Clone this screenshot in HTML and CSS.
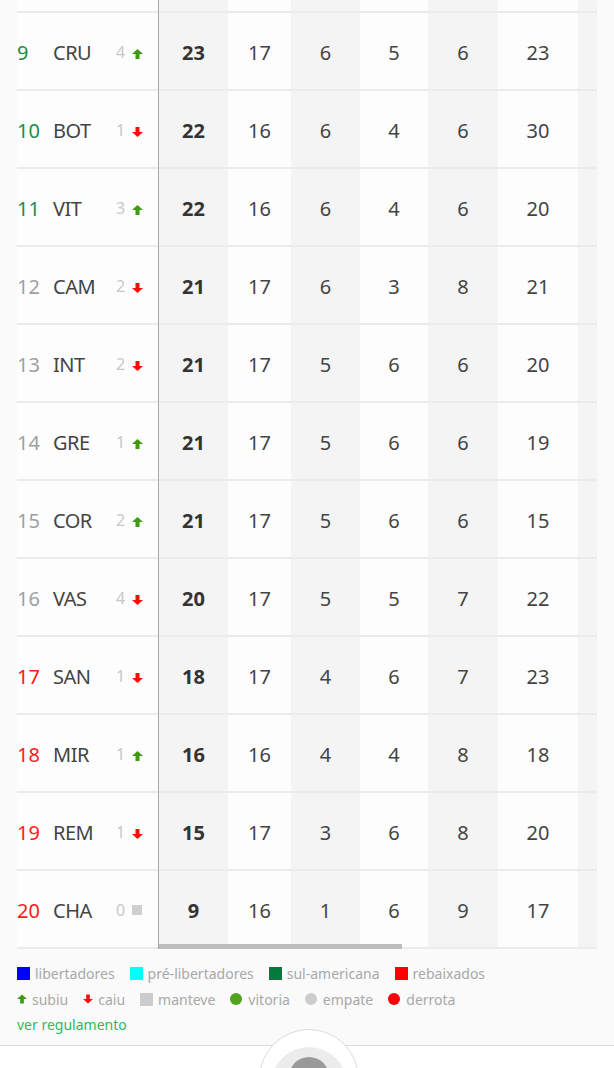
FILE: index.html
```html
<!DOCTYPE html>
<html lang="pt-BR">
<head>
    <meta charset="UTF-8">
    <meta name="viewport" content="width=device-width, initial-scale=1.0">
    <title>Classificação</title>
    <link rel="stylesheet" href="styles.css">
</head>
<body>
    <div class="standings">
        <!-- fixed columns: position, team, variation -->
        <div class="fixed">
            <div class="row stub"></div>
            <div class="row"><span class="pos sula">9</span><span class="team">CRU</span><span class="var">4<svg class="arrow up" viewBox="0 0 11 10"><polygon points="5.5,0 11,5 7.5,5 7.5,10 3.5,10 3.5,5 0,5"/></svg></span></div>
            <div class="row"><span class="pos sula">10</span><span class="team">BOT</span><span class="var">1<svg class="arrow down" viewBox="0 0 11 10"><polygon points="5.5,10 11,5 7.5,5 7.5,0 3.5,0 3.5,5 0,5"/></svg></span></div>
            <div class="row"><span class="pos sula">11</span><span class="team">VIT</span><span class="var">3<svg class="arrow up" viewBox="0 0 11 10"><polygon points="5.5,0 11,5 7.5,5 7.5,10 3.5,10 3.5,5 0,5"/></svg></span></div>
            <div class="row"><span class="pos">12</span><span class="team">CAM</span><span class="var">2<svg class="arrow down" viewBox="0 0 11 10"><polygon points="5.5,10 11,5 7.5,5 7.5,0 3.5,0 3.5,5 0,5"/></svg></span></div>
            <div class="row"><span class="pos">13</span><span class="team">INT</span><span class="var">2<svg class="arrow down" viewBox="0 0 11 10"><polygon points="5.5,10 11,5 7.5,5 7.5,0 3.5,0 3.5,5 0,5"/></svg></span></div>
            <div class="row"><span class="pos">14</span><span class="team">GRE</span><span class="var">1<svg class="arrow up" viewBox="0 0 11 10"><polygon points="5.5,0 11,5 7.5,5 7.5,10 3.5,10 3.5,5 0,5"/></svg></span></div>
            <div class="row"><span class="pos">15</span><span class="team">COR</span><span class="var">2<svg class="arrow up" viewBox="0 0 11 10"><polygon points="5.5,0 11,5 7.5,5 7.5,10 3.5,10 3.5,5 0,5"/></svg></span></div>
            <div class="row"><span class="pos">16</span><span class="team">VAS</span><span class="var">4<svg class="arrow down" viewBox="0 0 11 10"><polygon points="5.5,10 11,5 7.5,5 7.5,0 3.5,0 3.5,5 0,5"/></svg></span></div>
            <div class="row"><span class="pos rebaixado">17</span><span class="team">SAN</span><span class="var">1<svg class="arrow down" viewBox="0 0 11 10"><polygon points="5.5,10 11,5 7.5,5 7.5,0 3.5,0 3.5,5 0,5"/></svg></span></div>
            <div class="row"><span class="pos rebaixado">18</span><span class="team">MIR</span><span class="var">1<svg class="arrow up" viewBox="0 0 11 10"><polygon points="5.5,0 11,5 7.5,5 7.5,10 3.5,10 3.5,5 0,5"/></svg></span></div>
            <div class="row"><span class="pos rebaixado">19</span><span class="team">REM</span><span class="var">1<svg class="arrow down" viewBox="0 0 11 10"><polygon points="5.5,10 11,5 7.5,5 7.5,0 3.5,0 3.5,5 0,5"/></svg></span></div>
            <div class="row"><span class="pos rebaixado">20</span><span class="team">CHA</span><span class="var">0<i class="same"></i></span></div>
        </div>

        <!-- scrolling columns: P J V E D GP ... -->
        <div class="scroll">
            <div class="row stub"><span></span><span></span><span></span><span></span><span></span><span></span><span></span></div>
            <div class="row"><span>23</span><span>17</span><span>6</span><span>5</span><span>6</span><span>23</span><span></span></div>
            <div class="row"><span>22</span><span>16</span><span>6</span><span>4</span><span>6</span><span>30</span><span></span></div>
            <div class="row"><span>22</span><span>16</span><span>6</span><span>4</span><span>6</span><span>20</span><span></span></div>
            <div class="row"><span>21</span><span>17</span><span>6</span><span>3</span><span>8</span><span>21</span><span></span></div>
            <div class="row"><span>21</span><span>17</span><span>5</span><span>6</span><span>6</span><span>20</span><span></span></div>
            <div class="row"><span>21</span><span>17</span><span>5</span><span>6</span><span>6</span><span>19</span><span></span></div>
            <div class="row"><span>21</span><span>17</span><span>5</span><span>6</span><span>6</span><span>15</span><span></span></div>
            <div class="row"><span>20</span><span>17</span><span>5</span><span>5</span><span>7</span><span>22</span><span></span></div>
            <div class="row"><span>18</span><span>17</span><span>4</span><span>6</span><span>7</span><span>23</span><span></span></div>
            <div class="row"><span>16</span><span>16</span><span>4</span><span>4</span><span>8</span><span>18</span><span></span></div>
            <div class="row"><span>15</span><span>17</span><span>3</span><span>6</span><span>8</span><span>20</span><span></span></div>
            <div class="row"><span>9</span><span>16</span><span>1</span><span>6</span><span>9</span><span>17</span><span></span></div>
            <div class="thumb"></div>
        </div>
    </div>

    <div class="legend">
        <div class="legend-line">
            <span class="item"><i class="box libertadores"></i>libertadores</span>
            <span class="item"><i class="box pre-libertadores"></i>pré-libertadores</span>
            <span class="item"><i class="box sul-americana"></i>sul-americana</span>
            <span class="item"><i class="box rebaixados"></i>rebaixados</span>
        </div>
        <div class="legend-line">
            <span class="item"><svg class="arrow up" viewBox="0 0 11 10"><polygon points="5.5,0 11,5 7.5,5 7.5,10 3.5,10 3.5,5 0,5"/></svg>subiu</span>
            <span class="item"><svg class="arrow down" viewBox="0 0 11 10"><polygon points="5.5,10 11,5 7.5,5 7.5,0 3.5,0 3.5,5 0,5"/></svg>caiu</span>
            <span class="item"><i class="box manteve"></i>manteve</span>
            <span class="item"><i class="dot vitoria"></i>vitoria</span>
            <span class="item"><i class="dot empate"></i>empate</span>
            <span class="item"><i class="dot derrota"></i>derrota</span>
        </div>
        <a class="rules" href="#">ver regulamento</a>
    </div>

    <div class="bottom-bar">
        <div class="bump">
            <div class="ring"><div class="ring-inner"></div></div>
        </div>
    </div>
</body>
</html>
```

FILE: styles.css
```css
body {
    font-family: "Noto Sans", Roboto, sans-serif;
    background-color: #fafafa;
    margin: 0;
    padding: 0;
    overflow: hidden;
}
.standings {
    display: flex;
    width: 580px;
    margin-left: 17px;
    background: #fdfdfd;
}
.row {
    height: 74px;
    padding-top: 2px;
    border-bottom: 2px solid #ebebeb;
    display: flex;
    align-items: center;
}
.row.stub {
    height: 11px;
    padding-top: 0;
}
.fixed {
    width: 141px;
    flex-shrink: 0;
    border-right: 1px solid #a8a8a8;
}
.pos {
    width: 36px;
    font-size: 20px;
    color: #a0a0a0;
}
.pos.sula {
    color: #1d8c48;
}
.pos.rebaixado {
    color: #ff1a1a;
}
.team {
    width: 63px;
    font-size: 20px;
    color: #444;
    letter-spacing: -0.5px;
}
.var {
    display: flex;
    align-items: center;
    font-size: 16px;
    color: #c8c8c8;
}
.arrow {
    width: 11px;
    height: 10px;
    margin-left: 7px;
    margin-top: 3px;
}
.arrow.up {
    fill: #3f9a0f;
}
.arrow.down {
    fill: #ff0a0a;
}
.same {
    display: inline-block;
    width: 10px;
    height: 10px;
    margin-left: 7px;
    background: #cfcfcf;
}
.scroll {
    flex: 1;
    overflow: hidden;
    position: relative;
}
.scroll .row {
    width: 800px;
    align-items: stretch;
    padding-top: 0;
    height: 76px;
}
.scroll .row.stub {
    height: 11px;
}
.scroll .row span {
    display: flex;
    align-items: center;
    justify-content: center;
    padding-top: 2px;
    font-size: 20px;
    color: #444;
}
.scroll .row span:nth-child(1) { width: 69px; background: #f4f4f4; font-weight: bold; color: #333; }
.scroll .row span:nth-child(2) { width: 63px; }
.scroll .row span:nth-child(3) { width: 69px; background: #f4f4f4; }
.scroll .row span:nth-child(4) { width: 68px; }
.scroll .row span:nth-child(5) { width: 70px; background: #f4f4f4; }
.scroll .row span:nth-child(6) { width: 80px; }
.scroll .row span:nth-child(7) { width: 70px; background: #f4f4f4; }
.thumb {
    position: absolute;
    left: 0;
    bottom: 0;
    width: 243px;
    height: 5px;
    background: #bdbdbd;
}
.legend {
    padding: 11px 17px 7px;
    font-size: 14px;
    color: #a8a8a8;
}
.legend-line {
    display: flex;
    align-items: center;
    height: 26px;
}
.item {
    display: flex;
    align-items: center;
    margin-right: 15px;
}
.item .arrow {
    width: 10px;
    margin: 0 5px 0 0;
}
.box {
    width: 13px;
    height: 13px;
    margin-right: 5px;
}
.dot {
    width: 12px;
    height: 12px;
    border-radius: 50%;
    margin-right: 6px;
}
.libertadores { background: #0000ff; }
.pre-libertadores { background: #00ffff; }
.sul-americana { background: #007a3d; }
.rebaixados { background: #ff0000; }
.manteve { background: #cccccc; }
.vitoria { background: #52a21c; }
.empate { background: #cccccc; }
.derrota { background: #ff0000; }
.rules {
    display: block;
    height: 26px;
    line-height: 26px;
    color: #2dbb5d;
    text-decoration: none;
}
.bottom-bar {
    height: 80px;
    background: #fff;
    border-top: 1px solid #dcdcdc;
    display: flex;
    justify-content: center;
}
.bump {
    width: 100px;
    height: 100px;
    margin-top: -17px;
    margin-left: 3px;
    border: 1px solid #dcdcdc;
    border-radius: 50%;
    background: #fff;
    display: flex;
    justify-content: center;
    padding-top: 17px;
    box-sizing: border-box;
}
.ring {
    width: 76px;
    height: 76px;
    border-radius: 50%;
    background: #ececec;
    display: flex;
    justify-content: center;
    padding-top: 10px;
    box-sizing: border-box;
}
.ring-inner {
    width: 40px;
    height: 40px;
    border-radius: 50%;
    background: #9a9a9a;
}
```
